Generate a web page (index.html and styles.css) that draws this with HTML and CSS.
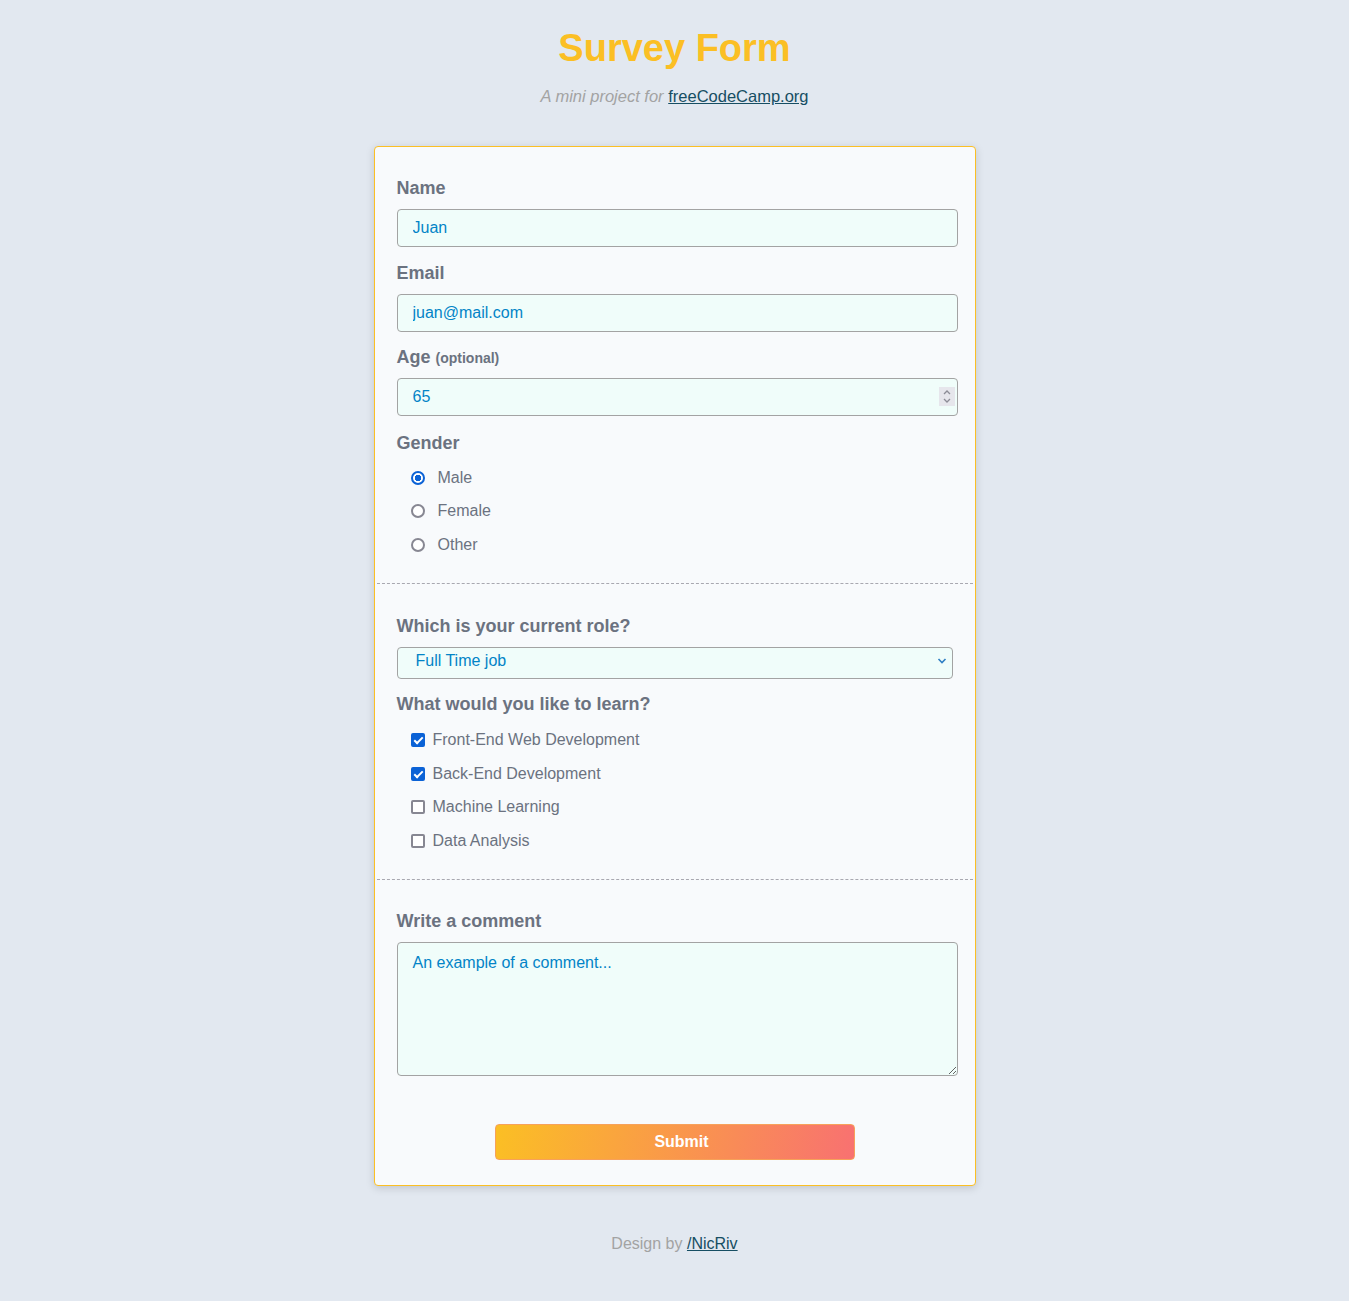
FILE: index.html
```html
<!DOCTYPE html>
<html lang="en">
<head>
<meta charset="utf-8">
<title>Survey Form</title>
<link rel="stylesheet" href="styles.css">
</head>
<body>
<header class="header">
  <h1 class="title" id="title">Survey Form</h1>
  <p class="subtitle" id="description"><em>A mini project for</em> <a class="link" href="#">freeCodeCamp.org</a></p>
</header>
<main>
  <form class="card" id="survey-form">
    <div class="section section-first">
      <div class="field">
        <label class="label" for="name">Name</label>
        <input class="input" id="name" type="text" value="Juan">
      </div>
      <div class="field field-email">
        <label class="label" for="email">Email</label>
        <input class="input" id="email" type="email" value="juan@mail.com">
      </div>
      <div class="field field-age">
        <label class="label" for="number">Age <small class="optional">(optional)</small></label>
        <div class="control-wrap">
          <input class="input" id="number" type="number" value="65">
          <span class="spinner" aria-hidden="true">
            <svg width="16" height="19" viewBox="0 0 16 19"><path d="M5 7 L8 4 L11 7" fill="none" stroke="#8c8c96" stroke-width="1.3"/><path d="M5 12 L8 15 L11 12" fill="none" stroke="#8c8c96" stroke-width="1.3"/></svg>
          </span>
        </div>
      </div>
      <div class="group">
        <span class="label group-label">Gender</span>
        <label class="option radio-option"><input class="radio" type="radio" name="gender" checked><span>Male</span></label>
        <label class="option radio-option"><input class="radio" type="radio" name="gender"><span>Female</span></label>
        <label class="option radio-option"><input class="radio" type="radio" name="gender"><span>Other</span></label>
      </div>
    </div>
    <div class="section section-second">
      <div class="field field-select">
        <label class="label" for="dropdown">Which is your current role?</label>
        <div class="control-wrap">
          <select class="select" id="dropdown">
            <option>Full Time job</option>
            <option>Part Time job</option>
            <option>Student</option>
          </select>
          <svg class="select-arrow" width="10" height="8" viewBox="0 0 10 8" aria-hidden="true"><path d="M1.5 2 L5 5.5 L8.5 2" fill="none" stroke="#2f7fc4" stroke-width="1.6"/></svg>
        </div>
      </div>
      <div class="group">
        <span class="label group-label group-label-learn">What would you like to learn?</span>
        <label class="option check-option"><input class="check" type="checkbox" checked><span>Front-End Web Development</span></label>
        <label class="option check-option"><input class="check" type="checkbox" checked><span>Back-End Development</span></label>
        <label class="option check-option"><input class="check" type="checkbox"><span>Machine Learning</span></label>
        <label class="option check-option"><input class="check" type="checkbox"><span>Data Analysis</span></label>
      </div>
    </div>
    <div class="section section-third">
      <div class="field">
        <label class="label" for="comment">Write a comment</label>
        <textarea class="textarea" id="comment">An example of a comment...</textarea>
      </div>
      <div class="actions">
        <button class="submit" type="button" id="submit">Submit</button>
      </div>
    </div>
  </form>
</main>
<footer class="footer">Design by <a class="link" href="#">/NicRiv</a></footer>
</body>
</html>
```
FILE: styles.css
```css
* { box-sizing: border-box; }

body {
  margin: 0;
  background: #e2e8f0;
  font-family: "Trebuchet MS", "Liberation Sans", Arial, sans-serif;
  color: #6b7280;
}

.header { text-align: center; padding-top: 24px; }

.title {
  margin: 0;
  font-size: 38px;
  line-height: 48px;
  font-weight: 700;
  color: #fbbf24;
}

.subtitle {
  margin: 14px 0 0;
  font-size: 16.5px;
  line-height: 20px;
  color: #a3a3a3;
}

.link { color: #164e63; }

.card {
  width: 602px;
  margin: 40px auto 0;
  background: #f8fafc;
  border: 1px solid #fbbf24;
  border-radius: 4px;
  box-shadow: 0 2px 8px rgba(0, 0, 0, 0.15);
}

.section {
  margin: 0 2px;
  padding: 29px 20px 21px;
}

.section-first { border-bottom: 1px dashed #a8a8b0; }
.section-second { border-bottom: 1px dashed #a8a8b0; padding-top: 30px; padding-bottom: 21px; }
.section-third { padding-top: 29px; padding-bottom: 25px; }

.field { margin-bottom: 14px; }
.field-email { margin-bottom: 13px; }
.field-age { margin-bottom: 15px; }
.field-select { margin-bottom: 13px; }

.label {
  display: block;
  height: 24px;
  font-size: 18px;
  line-height: 24px;
  font-weight: 700;
  color: #6b7280;
  margin-bottom: 9px;
}

.optional { font-size: 14px; line-height: 1; }

.control-wrap { position: relative; }

.input {
  display: block;
  width: calc(100% + 5px);
  height: 38px;
  padding: 0 15px;
  background: #f0fdfa;
  border: 1px solid #a3a3a3;
  border-radius: 4px;
  font-family: inherit;
  font-size: 16px;
  color: #0284c7;
  appearance: textfield;
  -moz-appearance: textfield;
}

.input::-webkit-inner-spin-button,
.input::-webkit-outer-spin-button { -webkit-appearance: none; margin: 0; }

.spinner {
  position: absolute;
  right: -2px;
  top: 9px;
  width: 16px;
  height: 19px;
  background: #e6e6ec;
  display: flex;
}

.select {
  display: block;
  width: 100%;
  height: 32px;
  padding: 0 14px 4px 18px;
  background: #f0fdfa;
  border: 1px solid #a3a3a3;
  border-radius: 4px;
  font-family: inherit;
  font-size: 16px;
  color: #0284c7;
  appearance: none;
  -webkit-appearance: none;
}

.select-arrow {
  position: absolute;
  right: 6px;
  top: 10px;
}

.group-label { margin-bottom: 6px; }
.group-label-learn { margin-bottom: 8px; }

.option {
  display: flex;
  align-items: center;
  height: 33.5px;
  font-size: 16px;
  color: #6b7280;
}

.radio-option { padding-left: 14px; gap: 13px; }
.check-option { padding-left: 14px; gap: 8px; }

.radio,
.check {
  appearance: none;
  -webkit-appearance: none;
  margin: 0;
  width: 14px;
  height: 14px;
  border: 2px solid #878792;
  background: #ffffff;
  flex: none;
  position: relative;
}

.radio { border-radius: 50%; }
.radio:checked {
  border-color: #0b62d6;
  background: radial-gradient(circle, #0b62d6 0, #0b62d6 3px, #ffffff 3.5px);
}

.check { border-radius: 2px; }
.check:checked {
  border-color: #0b62d6;
  background: #0b62d6;
}
.check:checked::after {
  content: "";
  position: absolute;
  left: 3px;
  top: 0px;
  width: 3px;
  height: 7px;
  border: solid #ffffff;
  border-width: 0 2px 2px 0;
  transform: rotate(45deg);
}

.textarea {
  display: block;
  width: calc(100% + 5px);
  height: 134px;
  padding: 10px 15px;
  background: #f0fdfa;
  border: 1px solid #a3a3a3;
  border-radius: 4px;
  font-family: inherit;
  font-size: 16px;
  line-height: 20px;
  color: #0284c7;
}

.actions {
  display: flex;
  justify-content: center;
  margin-top: 48px;
}

.submit {
  width: 360px;
  height: 36px;
  padding: 0 0 0 14px;
  border: 1px solid #f7a15a;
  border-radius: 4px;
  background: linear-gradient(100deg, #fbbf24, #f87171);
  color: #ffffff;
  font-family: inherit;
  font-size: 16px;
  font-weight: 700;
}

.footer {
  margin-top: 48px;
  padding-bottom: 48px;
  text-align: center;
  font-size: 16px;
  line-height: 20px;
  color: #a3a3a3;
}
```
